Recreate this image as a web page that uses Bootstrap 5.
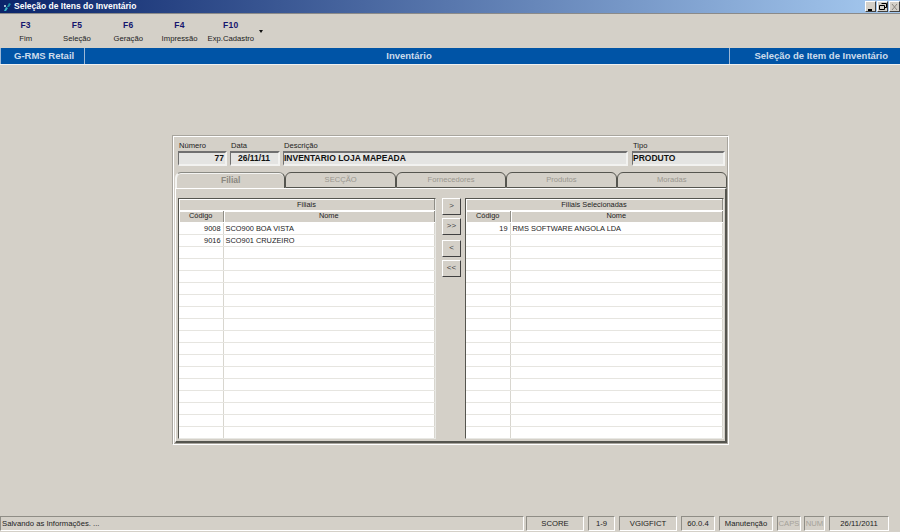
<!DOCTYPE html>
<html lang="pt">
<head>
<meta charset="utf-8">
<title>Seleção de Itens do Inventário</title>
<link href="https://cdn.jsdelivr.net/npm/bootstrap@5.3.0/dist/css/bootstrap.min.css" rel="stylesheet">
<style>
html,body{height:100%;margin:0;overflow:hidden}
body{background:#d4d0c8;font-family:"Liberation Sans",Arial,sans-serif;font-size:7.7px;color:#222;line-height:1}
.shell{width:900px;height:532px}
.titlebar{height:13px;background:linear-gradient(90deg,#0a246a 0,#a6caf0 100%);color:#fff;font-weight:700;font-size:8.5px;padding-left:3px;box-sizing:content-box;border-bottom:1px solid #8a8a8a}
.title-in{gap:3px}
.winbtns{padding-right:0}
.winbtn{width:11px;height:11px;background:#d4d0c8;border:1px solid;border-color:#fff #404040 #404040 #fff;margin-left:1px}
.toolbar{height:34px;padding-top:7px}
.tool{width:51.3px;text-align:center}
.tool b{display:block;color:#14146e;font-size:8.5px;letter-spacing:.3px;margin-bottom:5px}
.caret-s{width:0;height:0;border:2.5px solid transparent;border-top:3px solid #111;margin:9px 0 0 3px}
.band{height:17px;background:#0054a6;color:#cddcec;font-weight:700;font-size:9.5px;border-bottom:1px solid #f0f0f0}
.seg{height:16px;border-right:1px solid #9db8d6}
.seg-a{width:85px;padding-left:13px;border-left:1px solid #9db8d6}
.seg-b{width:645px;padding-left:4px}
.seg-c{flex:1;border:0;padding-right:12px}
.mainarea{flex:1;padding:70px 0 0 172px}
.panel{width:557px;height:310px;border:1px solid;border-color:#a8a59e #fff #fff #a8a59e;box-shadow:inset 1px 1px 0 #fff,inset -1px -1px 0 #a8a59e;padding:5px 1px 0 2px}
.fields{padding-left:3px;height:31px}
.fld label{display:block;height:10px;margin:0;padding:1px 0 0 1px;font-size:7.6px}
.fldbox{height:15px;background:#e4e4e2;border:2px solid;border-color:#707070 #f2f2f0 #f2f2f0 #707070;border-left-width:1px;font-weight:700;font-size:8.5px;color:#111;padding:1px 1px 0 0;white-space:nowrap}
.f1{width:49px;margin-right:3px}.f2{width:50px;margin-right:3px}.f3{width:345px;margin-right:4px}.f4{width:93px}
.tabsrow{height:16px}
.tabx{width:110.5px;height:16px;border:1px solid #55554f;border-radius:6px 6px 0 0;text-align:center;color:#9a978f;font-size:7.6px;padding-top:3px;background:#d4d0c8}
.tabx.on{border-bottom:0;font-weight:700;font-size:8.5px;color:#8b8881;border-color:#8a8a84 #55554f transparent #f4f4f2;border-width:1px 1px 0 2px;box-shadow:inset 0 1px 0 #f4f4f2;position:relative;z-index:1}
.tabbody{height:255px;border-style:solid;border-color:#fff #55554f #55554f #fff;border-width:1px 2px 2px 1px;padding:9px 1px 0 2px}
.gridwrap{border:1px solid;border-color:#55554f #e8e8e4 #e8e8e4 #55554f;height:241px;overflow:hidden;background:#fff}
.gl{width:258px}.gr{width:259px}
.mid{width:29px;padding:0 4px 0 6px}
.mini{display:block;width:19px;height:17px;padding:0 0 2px;font-size:8px;line-height:1;color:#444;background:#d4d0c8;border:1px solid;border-color:#fff #404040 #404040 #fff;border-radius:0;margin-bottom:3px}
.mini.gap{margin-top:5px}
.gridt{width:100%;border-collapse:collapse;table-layout:fixed;background:#fff;font-size:7.4px;margin:0}
.gridt td,.gridt th{height:12px;padding:1px 2px 0;border:0;border-right:1px solid #d8d6cf;border-bottom:1px solid #e6e5e0;line-height:1;overflow:hidden;white-space:nowrap;color:#222;font-weight:400}
.gridt th{background:#d4d0c8;text-align:center;padding-top:0;border-right:1px solid #8f8d86;border-bottom:1px solid #fff;box-shadow:inset 1px 1px 0 #fff}
.gridt tr:first-child th{height:11px}
.gridt td.num{text-align:right;padding-right:2px}
.statusbar{height:16px}
.sp{height:15px;border:1px solid;border-color:#8f8d86 #fff #fff #8f8d86;text-align:center;padding-top:3px;margin-right:4px;white-space:nowrap}
.sp.off{color:#a5a29a}
.s0{width:524px;text-align:left;padding-left:1px;margin-right:2px}
.w58{width:58px}.w27{width:27px}.w34{width:34px}.w54{width:54px}.w24{width:24px;margin-right:3px}.w21{width:21px}.w60{width:60px}
</style>
</head>
<body>
<div class="shell d-flex flex-column">
  <div class="titlebar d-flex align-items-center justify-content-between">
    <div class="d-flex align-items-center title-in">
      <svg width="8" height="10" viewBox="0 0 8 10"><path d="M1 9 L3 5 L5 6 L3 9Z" fill="#35b5c8"/><path d="M4 5 L6 1 L8 2 L6 5Z" fill="#1c8fa5"/><circle cx="2" cy="4" r="1" fill="#cfeef2"/></svg>
      <span>Seleção de Itens do Inventário</span>
    </div>
    <div class="winbtns d-flex">
      <div class="winbtn d-flex align-items-end justify-content-center"><svg width="7" height="6" viewBox="0 0 7 6"><rect x="1" y="4" width="4" height="2" fill="#000"/></svg></div>
      <div class="winbtn d-flex align-items-center justify-content-center"><svg width="8" height="7" viewBox="0 0 8 7"><path d="M2.5 .5H7.5V4.5H6M.5 2.5H5.5V6.5H.5Z" fill="none" stroke="#000"/></svg></div>
      <div class="winbtn d-flex align-items-center justify-content-center"><svg width="7" height="6" viewBox="0 0 7 6"><path d="M1 0L6 6M6 0L1 6" stroke="#8a8780" fill="none"/></svg></div>
    </div>
  </div>

  <div class="toolbar d-flex">
    <div class="tool"><b>F3</b>Fim</div>
    <div class="tool"><b>F5</b>Seleção</div>
    <div class="tool"><b>F6</b>Geração</div>
    <div class="tool"><b>F4</b>Impressão</div>
    <div class="tool"><b>F10</b>Exp.Cadastro</div>
    <div class="caret-s"></div>
  </div>

  <div class="band d-flex">
    <div class="seg seg-a d-flex align-items-center">G-RMS Retail</div>
    <div class="seg seg-b d-flex align-items-center justify-content-center">Inventário</div>
    <div class="seg seg-c d-flex align-items-center justify-content-end">Seleção de Item de Inventário</div>
  </div>

  <div class="mainarea">
    <div class="panel">
      <div class="fields d-flex">
        <div class="fld f1"><label>Número</label><div class="fldbox text-end">77</div></div>
        <div class="fld f2"><label>Data</label><div class="fldbox text-center">26/11/11</div></div>
        <div class="fld f3"><label>Descrição</label><div class="fldbox">INVENTARIO LOJA MAPEADA</div></div>
        <div class="fld f4"><label>Tipo</label><div class="fldbox">PRODUTO</div></div>
      </div>
      <div class="tabsrow d-flex">
        <div class="tabx on">Filial</div>
        <div class="tabx">SECÇÃO</div>
        <div class="tabx">Fornecedores</div>
        <div class="tabx">Produtos</div>
        <div class="tabx">Moradas</div>
      </div>
      <div class="tabbody d-flex">
        <div class="gl gridwrap">
          <table class="gridt" id="t1"></table>
        </div>
        <div class="mid">
          <button class="btn mini" type="button">&gt;</button>
          <button class="btn mini" type="button">&gt;&gt;</button>
          <button class="btn mini gap" type="button">&lt;</button>
          <button class="btn mini" type="button">&lt;&lt;</button>
        </div>
        <div class="gr gridwrap">
          <table class="gridt" id="t2"></table>
        </div>
      </div>
    </div>
  </div>

  <div class="statusbar d-flex">
    <div class="sp s0">Salvando as Informações. ...</div>
    <div class="sp w58">SCORE</div>
    <div class="sp w27">1-9</div>
    <div class="sp w58">VGIGFICT</div>
    <div class="sp w34">60.0.4</div>
    <div class="sp w54">Manutenção</div>
    <div class="sp off w24">CAPS</div>
    <div class="sp off w21">NUM</div>
    <div class="sp w60">26/11/2011</div>
  </div>
</div>
<script>
function build(id,title,w,rows){
  var h='<colgroup><col style="width:'+w+'px"><col></colgroup><tr><th colspan="2">'+title+'</th></tr><tr><th>Código</th><th>Nome</th></tr>';
  for(var i=0;i<18;i++){var r=rows[i]||['',''];h+='<tr><td class="num">'+r[0]+'</td><td>'+r[1]+'</td></tr>';}
  document.getElementById(id).innerHTML=h;
}
build('t1','Filiais',44,[['9008','SCO900 BOA VISTA'],['9016','SCO901 CRUZEIRO']]);
build('t2','Filiais Selecionadas',44,[['19','RMS SOFTWARE ANGOLA LDA']]);
</script>
<script src="https://cdn.jsdelivr.net/npm/bootstrap@5.3.0/dist/js/bootstrap.bundle.min.js"></script>
</body>
</html>
